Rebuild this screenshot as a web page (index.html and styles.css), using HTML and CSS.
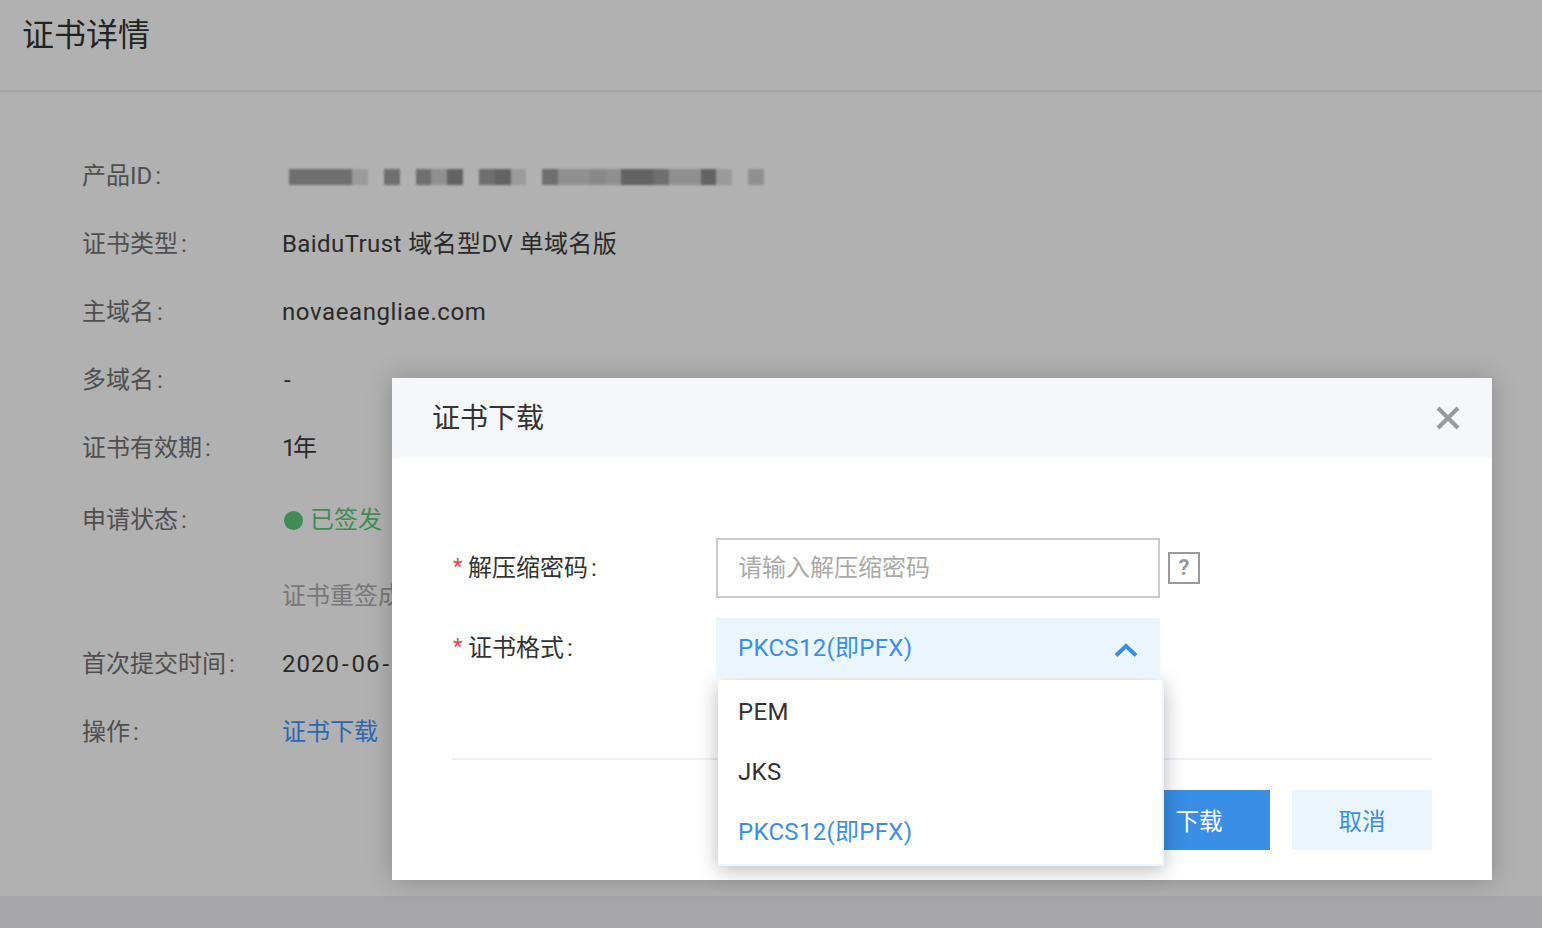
FILE: index.html
```html
<!DOCTYPE html>
<html lang="zh-CN">
<head>
<meta charset="utf-8">
<title>证书详情</title>
<link rel="stylesheet" href="styles.css">
</head>
<body>
<div class="page">
  <main class="main">
    <header class="page-head"><h1 class="page-title">证书详情</h1></header>
    <section class="details">
      <div class="row"><span class="label">产品ID<span class="colon">:</span></span>
        <div class="mosaic">
          <i class="d2"></i><i class="d2"></i><i class="d2"></i><i class="d2"></i><i class="l1"></i><i></i>
          <i class="d2"></i><i></i>
          <i class="d2"></i><i class="m1"></i><i class="d1"></i><i></i>
          <i class="d2"></i><i class="d1"></i><i class="l1"></i><i></i>
          <i class="d2"></i><i class="m1"></i><i class="m1"></i><i class="m2"></i><i class="m1"></i>
          <i class="d1"></i><i class="d1"></i><i class="d2"></i><i class="m1"></i><i class="m1"></i><i class="d1"></i><i class="l1"></i><i></i>
          <i class="m1"></i>
        </div>
      </div>
      <div class="row"><span class="label">证书类型<span class="colon">:</span></span><span class="value">BaiduTrust 域名型DV 单域名版</span></div>
      <div class="row"><span class="label">主域名<span class="colon">:</span></span><span class="value value-latin">novaeangliae.com</span></div>
      <div class="row"><span class="label">多域名<span class="colon">:</span></span><span class="value"><span class="hy">-</span></span></div>
      <div class="row"><span class="label">证书有效期<span class="colon">:</span></span><span class="value value-tight">1年</span></div>
      <div class="row row-status"><span class="label">申请状态<span class="colon">:</span></span><span class="status"><i class="dot"></i>已签发</span></div>
      <div class="row row-note"><span class="label"></span><span class="note">证书重签成功</span></div>
      <div class="row"><span class="label">首次提交时间<span class="colon">:</span></span><span class="value value-date">2020<span class="hy">-</span>06<span class="hy">-</span>01</span></div>
      <div class="row"><span class="label">操作<span class="colon">:</span></span><a class="link">证书下载</a></div>
    </section>
  </main>
  <footer class="foot"></footer>
</div>
<div class="mask"></div>
<div class="dialog">
  <div class="dialog-head">
    <h2 class="dialog-title">证书下载</h2>
    <svg class="close" viewBox="0 0 24 24" width="24" height="24"><path d="M2 2L22 22M22 2L2 22" stroke="#999" stroke-width="4" fill="none"/></svg>
  </div>
  <div class="dialog-body">
    <div class="form-row">
      <label class="form-label"><span class="req">*</span>解压缩密码<span class="colon">:</span></label>
      <div class="input">请输入解压缩密码</div>
      <span class="help">?</span>
    </div>
    <div class="form-row">
      <label class="form-label"><span class="req">*</span>证书格式<span class="colon">:</span></label>
      <div class="select">
        <span>PKCS12(即PFX)</span>
        <svg class="chev" viewBox="0 0 24 14" width="24" height="14"><path d="M2 12.5L12 3L22 12.5" stroke="#3a8ee6" stroke-width="4" fill="none"/></svg>
      </div>
    </div>
    <div class="divider"></div>
    <div class="actions">
      <button class="btn btn-primary">下载</button>
      <button class="btn btn-ghost">取消</button>
    </div>
    <ul class="menu">
      <li>PEM</li>
      <li>JKS</li>
      <li class="active">PKCS12(即PFX)</li>
    </ul>
  </div>
</div>
</body>
</html>
```
FILE: styles.css
```css
* { box-sizing: border-box; }
html, body { margin: 0; height: 928px; overflow: hidden; }
body {
  font-family: "Roboto", "Noto Sans CJK SC", sans-serif;
  font-size: 24px;
  line-height: 34px;
  color: #333;
  background: #fff;
  position: relative;
}
.page { height: 928px; display: flex; flex-direction: column; }
.main { flex: 1; }
.foot { height: 32px; background: #eff0f3; }
.page-head { height: 92px; border-bottom: 2px solid #f0f0f0; padding: 15px 0 0 22px; }
.page-title { margin: 0; font-size: 32px; font-weight: 400; line-height: 40px; color: #333; }
.details { padding: 50px 0 0 82px; }
.row { display: flex; align-items: center; height: 68px; }
.row-status { height: 76px; }
.row-note { height: 72px; padding-top: 4px; }
.label { width: 200px; flex: none; color: #737373; }
.colon { margin-left: 3px; }
.value { color: #3d3d3d; letter-spacing: 0.42px; }
.value-latin { letter-spacing: 0.6px; }
.value-tight { letter-spacing: -2.5px; }
.value-date { letter-spacing: 1px; }
.hy { display: inline-block; padding: 0 2px; }
.mosaic {
  display: grid; grid-template-columns: repeat(30, 1fr); width: 475px; height: 16px;
  margin: 2px 0 0 7px; filter: blur(0.8px);
}
.mosaic .d1 { background: #8f8f8f; }
.mosaic .d2 { background: #a0a0a0; }
.mosaic .m1 { background: #d0d0d0; }
.mosaic .m2 { background: #c4c4c4; }
.mosaic .l1 { background: #e0e0e0; }
.status { display: flex; align-items: center; color: #5ec97a; padding-left: 2px; }
.dot { width: 19px; height: 19px; border-radius: 50%; background: #5ec97a; margin-right: 7px; }
.note { color: #adadad; }
.link { color: #4096ff; }
.mask { position: absolute; inset: 0; background: rgba(0, 0, 0, 0.306); }
.dialog {
  position: absolute; left: 392px; top: 378px; width: 1100px; height: 502px;
  background: #fff; box-shadow: 0 0 24px rgba(0, 0, 0, 0.22);
}
.dialog-head {
  height: 80px; background: #f5f7fb; display: flex; align-items: center;
  justify-content: space-between; padding: 0 32px 0 40px;
}
.dialog-title { margin: 2px 0 0; font-size: 28px; line-height: 36px; font-weight: 400; color: #333; }
.dialog-body { position: relative; padding: 80px 60px 0; }
.form-row { display: flex; align-items: flex-start; margin-bottom: 20px; position: relative; }
.form-label { width: 264px; flex: none; color: #333; line-height: 60px; white-space: nowrap; }
.req {
  color: #e5484d; display: inline-block; width: 16px; padding-left: 1px; font-size: 22px;
  line-height: 20px; vertical-align: 2px;
}
.input {
  width: 444px; height: 60px; border: 2px solid #ccc; color: #aaa;
  padding-left: 20px; line-height: 56px;
}
.help {
  width: 32px; height: 32px; border: 2px solid #999; color: #999; margin: 14px 0 0 8px;
  font-size: 22px; font-weight: 700; line-height: 28px; text-align: center;
}
.select {
  width: 444px; height: 60px; background: #eaf5fe; color: #3a8ee6;
  display: flex; align-items: center; justify-content: space-between; padding: 0 22px;
  letter-spacing: 0.3px; position: relative; z-index: 2;
}
.chev { margin-top: 4px; }
.divider { height: 2px; background: #eeeff7; margin-top: 80px; }
.actions { display: flex; justify-content: flex-end; gap: 22px; margin-top: 30px; }
.btn {
  width: 140px; height: 60px; border: 0; padding: 3px 0 0; font: inherit; font-size: 23.5px;
}
.btn-primary { background: #3a8ee6; color: #fff; padding-right: 2px; }
.btn-ghost { background: #eaf5fe; color: #3a8ee6; }
.menu {
  position: absolute; left: 326px; top: 222px; width: 446px; height: 186px; margin: 0; padding: 2px 0 0;
  list-style: none; background: #fff; border-right: 2px solid #eaf5fe; border-bottom: 2px solid #eaf5fe;
  box-shadow: 0 4px 20px rgba(0, 0, 0, 0.28);
}
.menu li { height: 60px; line-height: 60px; padding-left: 20px; color: #333; letter-spacing: 0.3px; }
.menu .active { color: #3a8ee6; }
```
